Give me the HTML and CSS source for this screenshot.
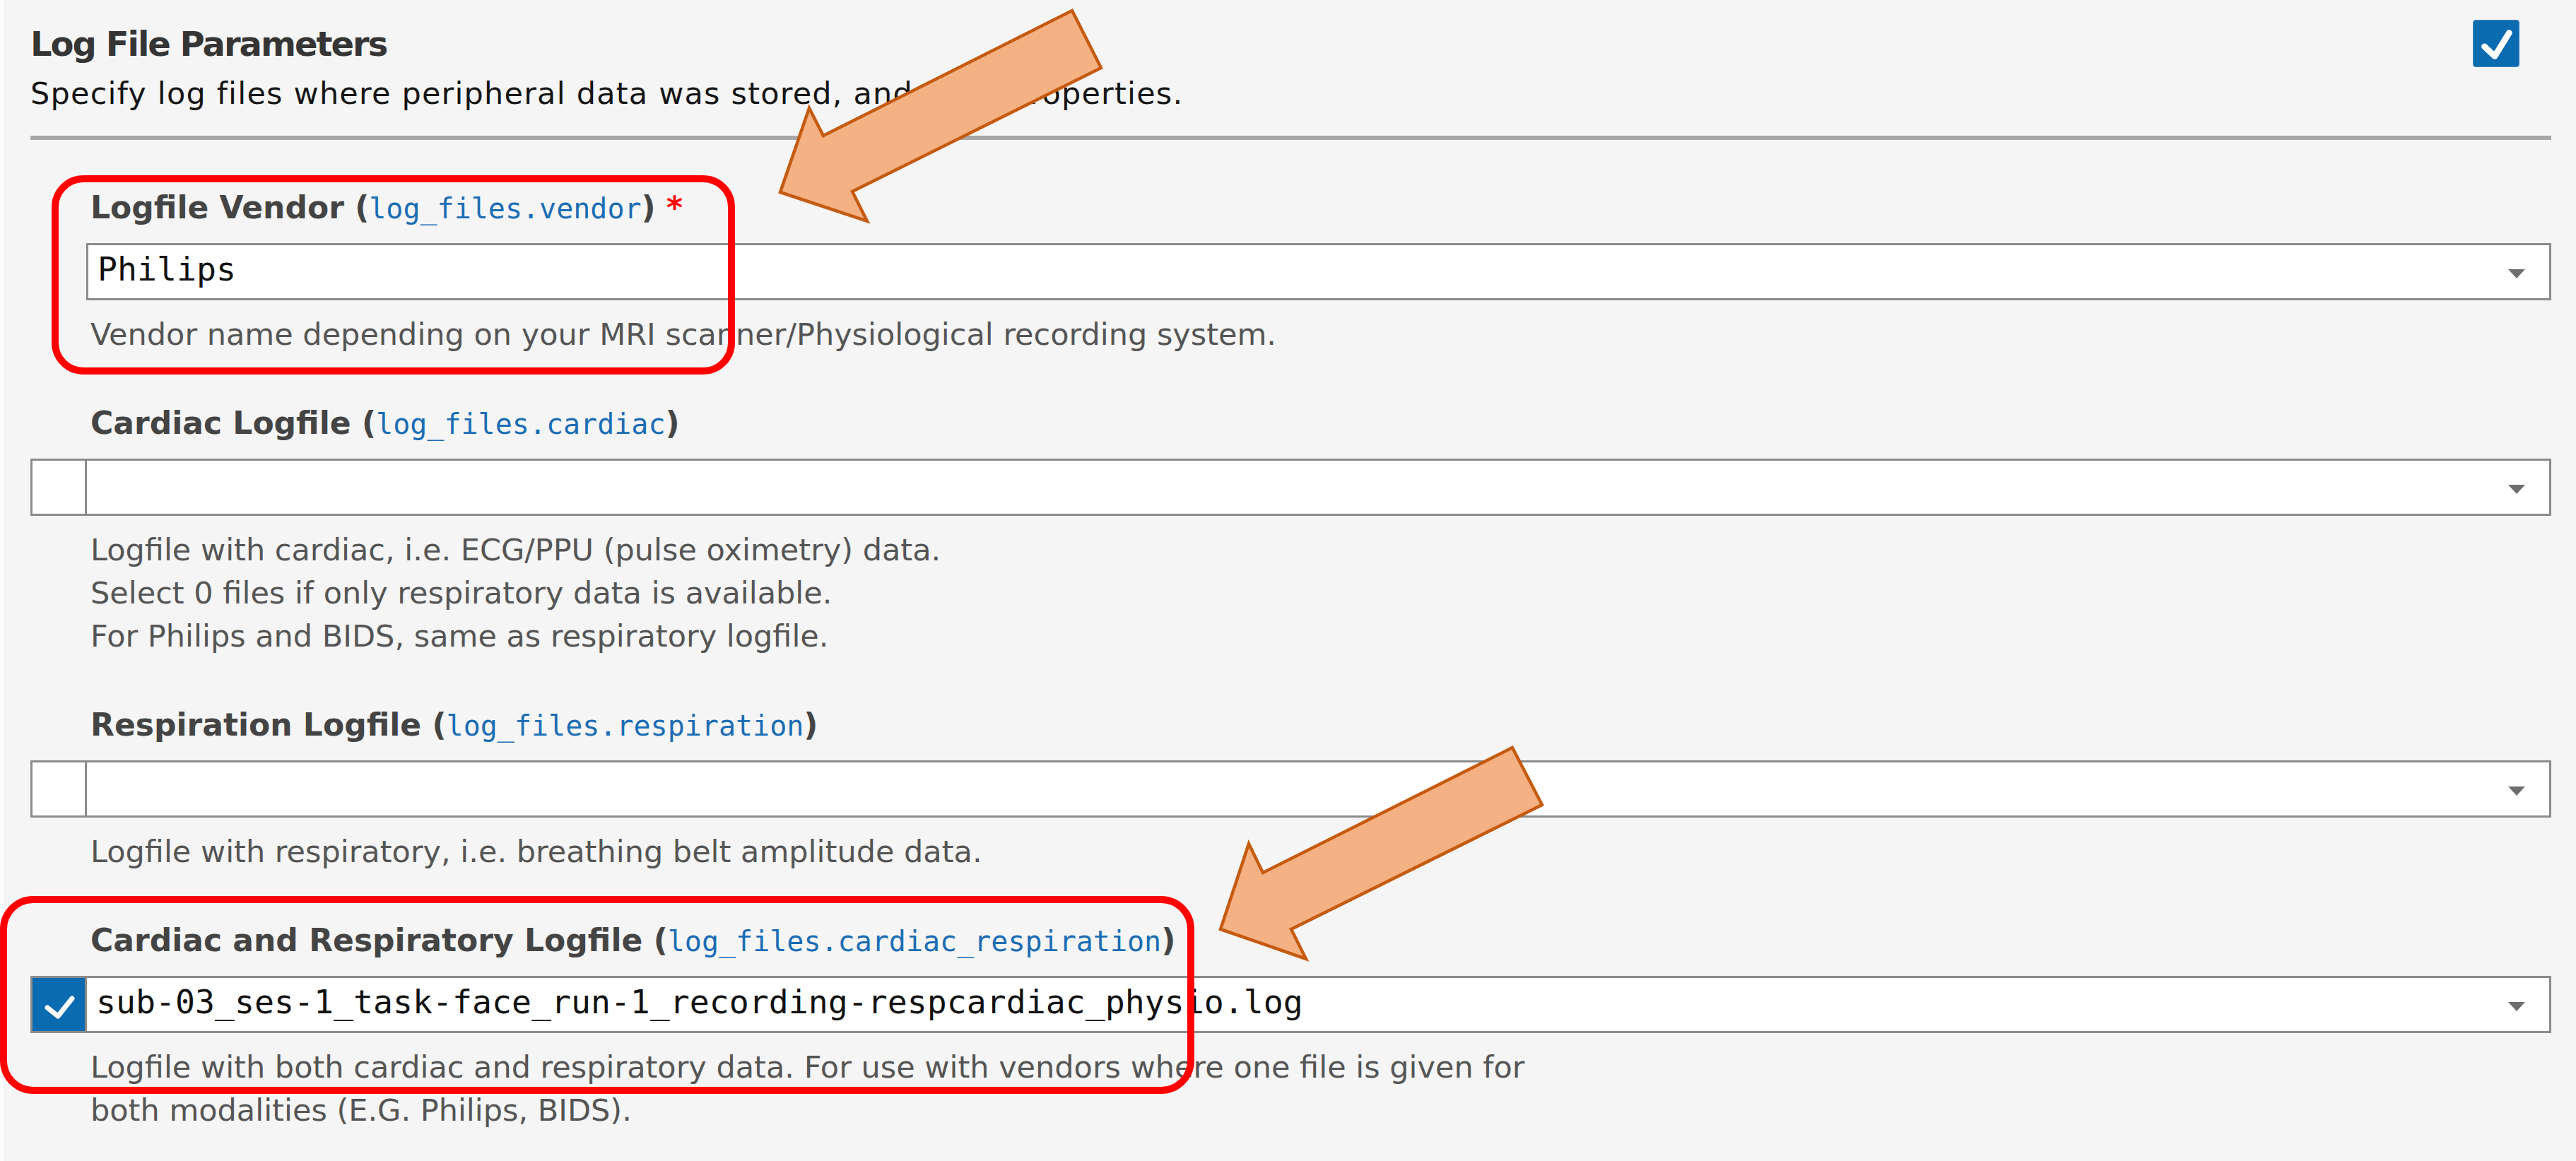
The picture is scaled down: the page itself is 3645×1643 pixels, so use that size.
FILE: index.html
```html
<!DOCTYPE html>
<html lang="en">
<head>
<meta charset="utf-8">
<title>Log File Parameters</title>
<link rel="stylesheet" href="styles.css">
</head>
<body>
<div class="panel">
  <header class="panel-head">
    <div class="head-text">
      <h1 class="title">Log File Parameters</h1>
      <p class="intro">Specify log files where peripheral data was stored, and their properties.</p>
    </div>
    <span class="enable-box">
      <svg class="enable-tick" viewBox="0 0 66 67" width="66" height="67"><path d="M16 37 L31 51 L52 17" /></svg>
    </span>
  </header>
  <div class="rule"></div>

  <div class="fields">
    <section class="field">
      <div class="label">Logfile Vendor (<code class="key">log_files.vendor</code>) <span class="req">*</span></div>
      <div class="select plain">
        <span class="value">Philips</span>
        <span class="caret"></span>
      </div>
      <div class="help">Vendor name depending on your MRI scanner/Physiological recording system.</div>
    </section>

    <section class="field">
      <div class="label">Cardiac Logfile (<code class="key">log_files.cardiac</code>)</div>
      <div class="select">
        <span class="tick-cell"></span>
        <span class="value"></span>
        <span class="caret"></span>
      </div>
      <div class="help">Logfile with cardiac, i.e. ECG/PPU (pulse oximetry) data.<br>Select 0 files if only respiratory data is available.<br>For Philips and BIDS, same as respiratory logfile.</div>
    </section>

    <section class="field">
      <div class="label">Respiration Logfile (<code class="key">log_files.respiration</code>)</div>
      <div class="select">
        <span class="tick-cell"></span>
        <span class="value"></span>
        <span class="caret"></span>
      </div>
      <div class="help">Logfile with respiratory, i.e. breathing belt amplitude data.</div>
    </section>

    <section class="field">
      <div class="label">Cardiac and Respiratory Logfile (<code class="key">log_files.cardiac_respiration</code>)</div>
      <div class="select">
        <span class="tick-cell on">
          <svg class="cell-tick" viewBox="0 0 74 75" width="74" height="75"><path d="M21 42 L36 54 L56 29" /></svg>
        </span>
        <span class="value">sub-03_ses-1_task-face_run-1_recording-respcardiac_physio.log</span>
        <span class="caret"></span>
      </div>
      <div class="help">Logfile with both cardiac and respiratory data. For use with vendors where one file is given for<br>both modalities (E.G. Philips, BIDS).</div>
    </section>
  </div>
</div>

<svg class="annot" viewBox="0 0 3645 1643" width="3645" height="1643">
  <rect class="hl" x="78" y="253" width="957" height="272" rx="40" ry="40" />
  <rect class="hl" x="5" y="1273" width="1680" height="270" rx="42" ry="42" />
  <polygon class="arrow" points="1517,15 1558,96 1206,271 1227,313 1104,272 1145,153 1165,192" />
  <polygon class="arrow" points="2140,1058 2182,1139 1827,1315 1848,1357 1727,1315 1767,1194 1787,1235" />
</svg>
</body>
</html>
```

FILE: styles.css
```css
* { box-sizing: border-box; }

html, body {
  margin: 0;
  padding: 0;
}

body {
  position: relative;
  width: 3645px;
  height: 1643px;
  overflow: hidden;
  background: #fcfcfc;
  font-family: "DejaVu Sans", Verdana, sans-serif;
}

.panel {
  margin-left: 5px;
  min-height: 1643px;
  background: #f5f5f5;
  padding: 28px 35px 0 38px;
}

.panel-head {
  display: flex;
  justify-content: space-between;
  align-items: flex-start;
}

.title {
  margin: 6px 0 0;
  font-size: 48px;
  line-height: 56px;
  font-weight: bold;
  letter-spacing: -2px;
  color: #353535;
}

.intro {
  margin: 8px 0 0;
  font-size: 43px;
  line-height: 68px;
  letter-spacing: 1.2px;
  color: #151515;
}

.enable-box {
  flex: none;
  display: flex;
  width: 66px;
  height: 67px;
  margin-right: 45px;
  background: #0b6bb1;
  border: 1px solid #3d86c0;
  border-radius: 4px;
}

.enable-tick path,
.cell-tick path {
  fill: none;
  stroke: #ffffff;
  stroke-linecap: round;
  stroke-linejoin: round;
}

.enable-tick path { stroke-width: 9; }
.cell-tick path { stroke-width: 7; }

.rule {
  height: 6px;
  margin-top: 26px;
  background: #a8a8a8;
}

.fields {
  padding-top: 1px;
}

.field {
  margin-top: 70px;
}

.label {
  padding-left: 85px;
  font-size: 44px;
  line-height: 50px;
  font-weight: bold;
  color: #444444;
  white-space: nowrap;
}

.key {
  font-family: "DejaVu Sans Mono", "Liberation Mono", monospace;
  font-size: 40px;
  font-weight: normal;
  color: #1b6db4;
}

.req {
  color: #ff0000;
}

.select {
  display: flex;
  align-items: center;
  height: 81px;
  margin-top: 24px;
  border: 3px solid #8b8b8b;
  background: #ffffff;
}

.select.plain {
  margin-left: 79px;
}

.tick-cell {
  flex: none;
  align-self: stretch;
  display: flex;
  width: 77px;
  border-right: 3px solid #8b8b8b;
  background: #ffffff;
}

.tick-cell.on {
  background: #0b6bb1;
}

.value {
  flex: 1;
  margin-bottom: 7px;
  padding-left: 13px;
  font-family: "DejaVu Sans Mono", "Liberation Mono", monospace;
  font-size: 46.5px;
  line-height: 56px;
  color: #111111;
  white-space: nowrap;
}

.caret {
  flex: none;
  width: 0;
  height: 0;
  margin-top: 6px;
  margin-right: 34px;
  border-left: 12.5px solid transparent;
  border-right: 12.5px solid transparent;
  border-top: 13px solid #6e6e6e;
}

.help {
  margin-top: 18px;
  padding-left: 85px;
  font-size: 43px;
  line-height: 61px;
  color: #555555;
  white-space: nowrap;
}

.annot {
  position: absolute;
  left: 0;
  top: 0;
  pointer-events: none;
}

.hl {
  fill: none;
  stroke: #ff0000;
  stroke-width: 10;
}

.arrow {
  fill: #f4b183;
  stroke: #c55a11;
  stroke-width: 4.5;
  stroke-linejoin: miter;
}
```
